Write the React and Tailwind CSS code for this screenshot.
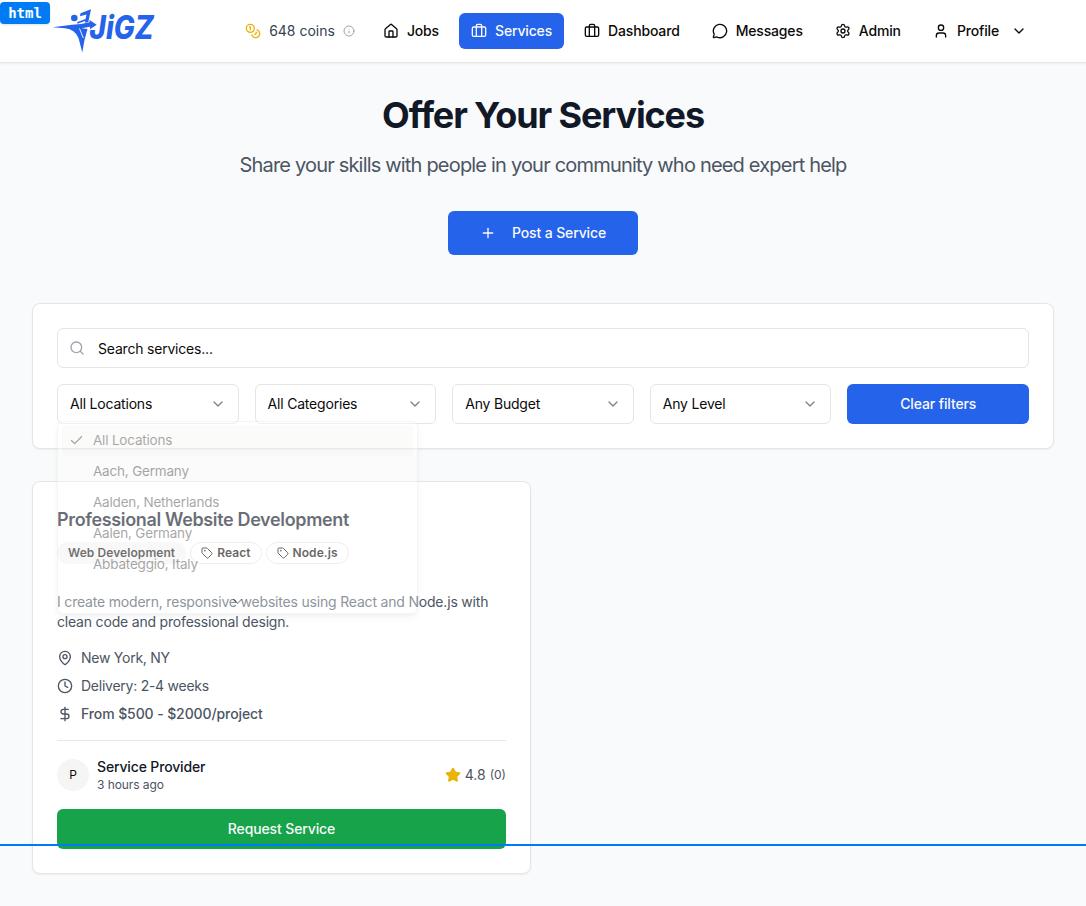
import React from "react";
import { Coins, Info, House, Briefcase, MessageCircle, Settings, User, ChevronDown, Plus, Search, Check, Tag, MapPin, Clock, DollarSign, Star } from "lucide-react";

function NavItem({ icon: Icon, label, active, chevron }) {
  return (
    <a className={`flex h-9 items-center gap-2 rounded-md px-3 text-sm font-medium tracking-[-0.16px] ${active ? "bg-[#2563eb] text-gray-50" : "text-[#0c0a09]"}`}>
      <Icon size={16} />
      <span>{label}</span>
      {chevron && <ChevronDown size={16} className="ml-1" />}
    </a>
  );
}

function Logo() {
  return (
    <svg className="block h-[46px] w-[112px] overflow-visible text-[#2563eb]" viewBox="0 0 112 46" fill="currentColor" role="img">
      <circle cx="21.3" cy="10" r="3.3" />
      <path d="M27.500 5.300 38 1.300 35.300 14 31.800 14.800 33.500 6.500 27 8.300Z" />
      <path d="M24 14.200 33 10.800 32.600 12.800 24.500 15.800Z" />
      <path d="M-.5 19.300 19 16.800 28 16 36.500 14.200 36.500 12 43.700 16.800 37 21.300 37 18.800 28.500 20.300 34.500 21 31.500 32 29.300 44.500 25.500 30Q22 21.500 12 20.300Z" />
      <path d="M26.500 20.500 30.300 30" stroke="white" strokeWidth="0.9" />
      <text x="36.500" y="31" fontFamily="Inter, sans-serif" fontSize="32" fontWeight="800" fontStyle="italic" textLength="64" lengthAdjust="spacingAndGlyphs">JiGZ</text>
    </svg>
  );
}

function Select({ label }) {
  return (
    <div className="flex h-10 items-center justify-between rounded-md border border-[#e7e5e4] bg-white px-3 text-sm tracking-[-0.2px] text-[#0c0a09]">
      <span>{label}</span>
      <ChevronDown size={16} className="opacity-50" />
    </div>
  );
}

function Badge({ children }) {
  return (
    <span className="flex h-[22px] items-center gap-1 rounded-full border border-[#e7e5e4] px-2.5 text-xs font-semibold tracking-[0.07px] text-[#0c0a09]">
      <Tag size={12} />
      {children}
    </span>
  );
}

const places = ["All Locations", "Aach, Germany", "Aalden, Netherlands", "Aalen, Germany", "Abbateggio, Italy"];

function LocationMenu() {
  return (
    <div className="absolute left-6 top-[117px] z-10 h-[193px] w-[361px] rounded-md border border-[#e7e5e4] bg-white px-1 pt-[3px] text-[13.500px] tracking-[-0.19px] text-[#0c0a09] opacity-[0.37] shadow-md">
      {places.map((place, i) => (
        <div key={place} className={`flex h-[31px] items-center rounded-sm pl-[7px] ${i === 0 ? "bg-[#f5f5f4]" : ""}`}>
          <span className="w-6">{i === 0 && <Check size={15} />}</span>
          <span>{place}</span>
        </div>
      ))}
      <div className="flex h-[29px] items-end justify-center">
        <ChevronDown size={15} />
      </div>
    </div>
  );
}

export default function App() {
  return (
    <div className="relative h-[906px] overflow-hidden bg-[#f9fafb] font-['Inter',sans-serif] text-[#0c0a09]">
      <header className="flex h-[63px] items-center justify-between border-b border-[#e5e7eb] bg-white pl-[53px] pr-[47px] shadow-xs">
        <Logo />
        <nav className="flex items-center gap-2">
          <div className="mr-2 flex items-center gap-2 text-sm text-[#374151]">
            <Coins size={16} className="text-[#eab308]" />
            <span>648 coins</span>
            <Info size={12} className="text-[#9ca3af]" />
          </div>
          <NavItem icon={House} label="Jobs" />
          <NavItem icon={Briefcase} label="Services" active />
          <NavItem icon={Briefcase} label="Dashboard" />
          <NavItem icon={MessageCircle} label="Messages" />
          <NavItem icon={Settings} label="Admin" />
          <NavItem icon={User} label="Profile" chevron />
        </nav>
      </header>

      <main className="px-8 pt-8">
        <section className="flex flex-col items-center">
          <h1 className="text-4xl font-bold leading-10 tracking-[-1.12px] text-[#111827]">Offer Your Services</h1>
          <p className="mt-4 text-xl tracking-[-0.81px] text-[#4b5563]">Share your skills with people in your community who need expert help</p>
          <button className="mt-8 flex h-11 w-[190px] items-center justify-center gap-4 rounded-md bg-[#2563eb] text-sm font-medium tracking-[-0.13px] text-gray-50">
            <Plus size={16} />
            Post a Service
          </button>
        </section>

        <section className="relative mt-12 h-[146px] rounded-lg border border-[#e7e5e4] bg-white p-6 shadow-xs">
          <div className="flex h-10 items-center gap-[13px] rounded-md border border-[#e7e5e4] px-[11px] text-sm tracking-[-0.2px]">
            <Search size={16} className="text-[#9ca3af]" />
            <span className="pt-0.5">Search services...</span>
          </div>
          <div className="mt-4 grid grid-cols-5 gap-4">
            <Select label="All Locations" />
            <Select label="All Categories" />
            <Select label="Any Budget" />
            <Select label="Any Level" />
            <button className="h-10 rounded-md bg-[#2563eb] text-sm font-medium tracking-[-0.13px] text-gray-50">Clear filters</button>
          </div>
          <LocationMenu />
        </section>

        <article className="mt-8 h-[393px] w-[499px] rounded-lg border border-[#e7e5e4] bg-white px-6 shadow-xs">
          <h2 className="mt-6 text-lg font-semibold tracking-[-0.35px] text-[#111827]">Professional Website Development</h2>
          <div className="mt-2 flex gap-1">
            <span className="flex h-[22px] items-center rounded-full bg-[#f5f5f4] px-[11px] text-xs font-semibold tracking-[0.07px] text-[#1c1917]">Web Development</span>
            <Badge>React</Badge>
            <Badge>Node.js</Badge>
          </div>
          <p className="mt-7 text-sm tracking-[-0.19px] text-[#4b5563]">I create modern, responsive websites using React and Node.js with clean code and professional design.</p>
          <div className="mt-4 flex flex-col gap-2 text-sm tracking-[-0.25px] text-[#4b5563]">
            <div className="flex items-center gap-2"><MapPin size={16} /><span>New York, NY</span></div>
            <div className="flex items-center gap-2"><Clock size={16} /><span>Delivery: 2-4 weeks</span></div>
            <div className="flex items-center gap-2 font-medium tracking-[-0.1px]"><DollarSign size={16} /><span>From $500 - $2000/project</span></div>
          </div>
          <div className="mt-4 flex items-center justify-between border-t border-[#e5e7eb] pt-4">
            <div className="flex items-center gap-2">
              <span className="flex size-8 items-center justify-center rounded-full bg-[#f5f5f4] text-xs">P</span>
              <div>
                <div className="text-sm font-medium tracking-[-0.15px] text-[#111827]">Service Provider</div>
                <div className="text-xs tracking-[-0.08px] text-[#4b5563]">3 hours ago</div>
              </div>
            </div>
            <div className="flex items-center gap-1 text-[#4b5563]">
              <Star size={16} className="fill-[#eab308] text-[#eab308]" />
              <span className="text-sm">4.8</span>
              <span className="text-xs">(0)</span>
            </div>
          </div>
          <button className="mt-4 h-10 w-full rounded-md bg-[#16a34a] text-sm font-medium tracking-[-0.13px] text-gray-50">Request Service</button>
        </article>
      </main>

      <div className="absolute left-0 top-[844px] z-20 h-0.5 w-full bg-[#007bf5]" />
      <div className="absolute left-0 top-[2px] z-20 flex h-[22px] w-[50px] items-center justify-center rounded bg-[#007bf5] font-['DejaVu_Sans_Mono',monospace] text-[14px] font-bold text-white shadow">html</div>
    </div>
  );
}
